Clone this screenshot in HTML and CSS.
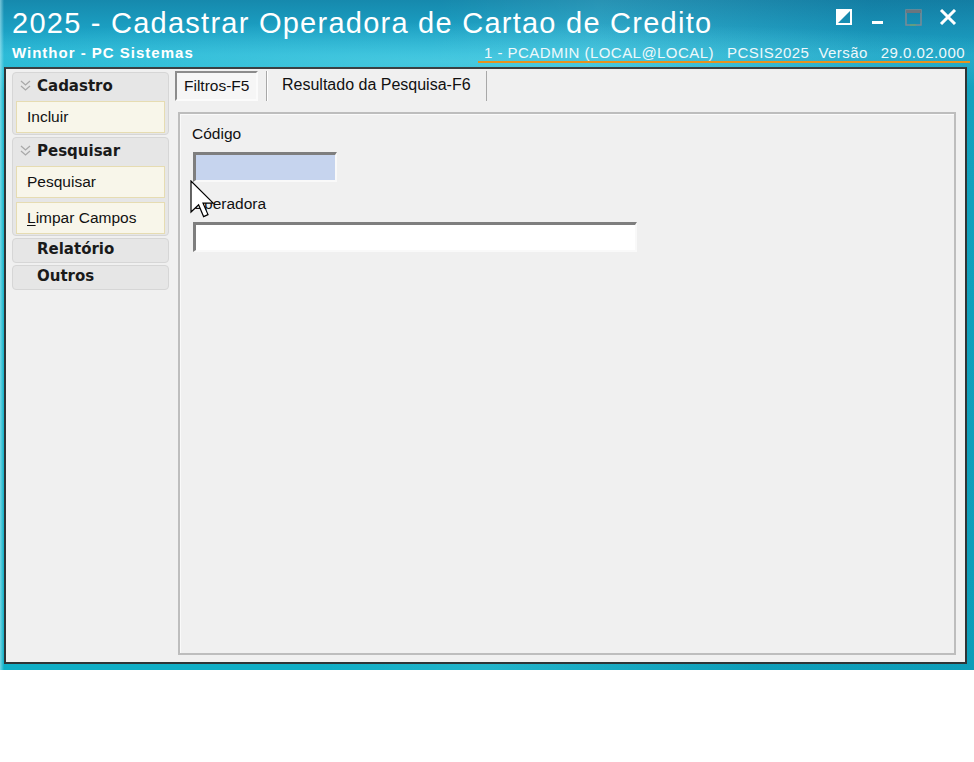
FILE: index.html
```html
<!DOCTYPE HTML>
<html>
	<head>
		<title>2025 - Cadastrar Operadora de Cartao de Credito</title>
		<meta charset="utf-8" />
		<link rel="stylesheet" href="styles.css">
	</head>
	<body>
		<div class="window">
			<div class="titlebar">
				<div class="title-row">
					<h1 class="title">2025 - Cadastrar Operadora de Cartao de Credito</h1>
					<div class="win-controls">
						<svg class="wc-restore" width="16" height="16" viewBox="0 0 16 16">
							<rect x="1" y="1" width="14" height="14" fill="none" stroke="#fff" stroke-width="2"/>
							<polygon points="1,1 15,1 1,15" fill="#fff"/>
						</svg>
						<svg class="wc-min" width="13" height="16" viewBox="0 0 13 16">
							<rect x="1" y="12" width="11" height="3" fill="#fff"/>
						</svg>
						<svg class="wc-max" width="17" height="17" viewBox="0 0 17 17">
							<rect x="1" y="1" width="15" height="15" fill="none" stroke="#7d8a94" stroke-width="1.5"/>
							<rect x="1" y="1" width="15" height="3" fill="#6a757e"/>
							<line x1="5" y1="16" x2="11" y2="16" stroke="#5fb06a" stroke-width="1"/>
						</svg>
						<svg class="wc-close" width="18" height="16" viewBox="0 0 18 16">
							<path d="M2 1 L16 15 M16 1 L2 15" stroke="#fff" stroke-width="3"/>
						</svg>
					</div>
				</div>
				<div class="sub-row">
					<span class="subtitle">Winthor - PC Sistemas</span>
					<div class="session">
						<span>1 - PCADMIN (LOCAL@LOCAL)</span>
						<span class="gap-l">PCSIS2025</span>
						<span class="gap-s">Versão</span>
						<span class="gap-l">29.0.02.000</span>
					</div>
				</div>
			</div>

			<div class="client">
				<div class="sidebar">
					<div class="group">
						<div class="group-head">
							<svg class="chev" width="11" height="12" viewBox="0 0 11 12">
								<path d="M1 1 L5.5 5 L10 1 M1 6 L5.5 10 L10 6" fill="none" stroke="#a9a9a9" stroke-width="1.3"/>
							</svg>
							Cadastro
						</div>
						<div class="item">Incluir</div>
					</div>
					<div class="group">
						<div class="group-head">
							<svg class="chev" width="11" height="12" viewBox="0 0 11 12">
								<path d="M1 1 L5.5 5 L10 1 M1 6 L5.5 10 L10 6" fill="none" stroke="#a9a9a9" stroke-width="1.3"/>
							</svg>
							Pesquisar
						</div>
						<div class="item">Pesquisar</div>
						<div class="item"><u>L</u>impar Campos</div>
					</div>
					<div class="group collapsed">
						<div class="group-head">Relatório</div>
					</div>
					<div class="group collapsed">
						<div class="group-head">Outros</div>
					</div>
				</div>

				<div class="main">
					<div class="tabs">
						<div class="tab active">Filtros-F5</div>
						<div class="tab">Resultado da Pesquisa-F6</div>
					</div>
					<div class="panel">
						<label class="field-label">Código</label>
						<div class="input input-code"></div>
						<label class="field-label">Operadora</label>
						<div class="input input-oper"></div>
					</div>
				</div>
			</div>
		</div>

		<svg class="cursor" width="26" height="40" viewBox="0 0 13 20">
			<path d="M0.5 0.5 L0.5 16 L4.3 12.4 L6.8 18.3 L9 17.3 L6.5 11.6 L11.6 11.6 Z" fill="#fff" stroke="#000" stroke-width="0.6" stroke-linejoin="miter"/>
		</svg>
	</body>
</html>
```

FILE: styles.css
```css
body {
	margin: 0;
	padding: 0;
	background: #fff;
	font-family: "Liberation Sans", Arial, sans-serif;
	width: 974px;
	height: 762px;
	overflow: hidden;
}

.window {
	width: 974px;
	height: 670px;
	box-sizing: border-box;
	padding: 0 7px 6px 4px;
	display: flex;
	flex-direction: column;
	background:
		linear-gradient(90deg, rgba(200, 245, 250, 0.55) 0px, rgba(200, 245, 250, 0) 4px),
		radial-gradient(ellipse 70% 40px at 45% 62px, rgba(120, 225, 240, 0.45), rgba(120, 225, 240, 0) 100%),
		linear-gradient(100deg, rgba(255, 255, 255, 0) 40%, rgba(255, 255, 255, 0.08) 55%, rgba(0, 40, 90, 0.12) 80%),
		linear-gradient(180deg, #1689ad 0px, #1b9fc2 28px, #1fb4d3 55px, #14b3cc 90px, #0faec6 100%);
}

/* title bar */

.titlebar {
	height: 67px;
	margin-left: -4px;
	margin-right: -7px;
	padding: 0 9px 0 12px;
	box-sizing: border-box;
	color: #fff;
}

.title-row {
	display: flex;
	justify-content: space-between;
	align-items: flex-start;
	height: 44px;
}

.title {
	margin: 9px 0 0 0;
	font-size: 29px;
	line-height: 29px;
	font-weight: normal;
	letter-spacing: 1.25px;
	white-space: nowrap;
}

.win-controls {
	display: flex;
	align-items: flex-start;
	margin-top: 9px;
	margin-right: 8px;
}

.wc-min { margin-left: 19px; }
.wc-max { margin-left: 21px; }
.wc-close { margin-left: 17px; }

.sub-row {
	display: flex;
	justify-content: space-between;
	align-items: flex-start;
}

.subtitle {
	font-weight: bold;
	font-size: 15px;
	line-height: 17px;
	letter-spacing: 1px;
	white-space: nowrap;
}

.session {
	display: flex;
	font-size: 15px;
	line-height: 17px;
	letter-spacing: 0.45px;
	color: #eef8fb;
	white-space: nowrap;
	padding: 0 5px 0 6px;
	margin-right: -5px;
	border-bottom: 2px solid #e8921c;
}

.gap-l { margin-left: 13px; }
.gap-s { margin-left: 9px; }

/* client area */

.client {
	flex: 1;
	display: flex;
	background: #f0f0f0;
	border: 2px solid #2e3436;
	border-top-color: #3a3f42;
	min-height: 0;
}

.sidebar {
	width: 157px;
	padding: 3px 3px 0 6px;
	display: flex;
	flex-direction: column;
	gap: 2px;
}

.group {
	background: #e6e6e6;
	border: 1px solid #d6d6d6;
	border-radius: 4px;
	padding-bottom: 1px;
}

.group-head {
	position: relative;
	height: 28px;
	line-height: 26px;
	padding-left: 24px;
	font-family: "DejaVu Sans", sans-serif;
	font-weight: bold;
	font-size: 15px;
	color: #1a1a1a;
}

.group.collapsed {
	padding-bottom: 0;
}

.group.collapsed .group-head {
	height: 23px;
	line-height: 21px;
}

.chev {
	position: absolute;
	left: 7px;
	top: 7px;
}

.item {
	height: 30px;
	margin: 0 3px 4px 3px;
	padding-left: 10px;
	background: #f8f6ea;
	border: 1px solid #e6dcb2;
	font-size: 15.5px;
	line-height: 30px;
	color: #111;
}

.item:last-child {
	margin-bottom: 0;
}

.item u {
	text-decoration-thickness: 1px;
	text-underline-offset: 2px;
}

/* tabs and panel */

.main {
	flex: 1;
	display: flex;
	flex-direction: column;
	padding: 2px 9px 7px 3px;
	min-width: 0;
}

.tabs {
	display: flex;
	height: 30px;
	align-items: stretch;
}

.tab {
	font-size: 16px;
	line-height: 28px;
	color: #111;
	white-space: nowrap;
}

.tab.active {
	width: 72px;
	padding-left: 7px;
	border: 2px solid;
	border-color: #8c8c8c #fbfbfb #fbfbfb #8c8c8c;
	background: #f6f6f6;
	font-size: 15.5px;
	line-height: 26px;
}

.tab + .tab {
	margin-left: 8px;
	padding: 0 15px;
	border-left: 1px solid #a8a8a8;
	border-right: 1px solid #a8a8a8;
	box-shadow: inset 1px 0 0 #fff;
}

.panel {
	flex: 1;
	margin: 11px 0 0 3px;
	border: 2px solid #bdbdbd;
	box-shadow: inset 1px 1px 0 #fafafa;
	background: #f0f0f0;
	padding: 10px 0 0 12px;
	display: flex;
	flex-direction: column;
	align-items: flex-start;
}

.field-label {
	font-size: 15.5px;
	line-height: 20px;
	color: #111;
}

.input {
	box-sizing: border-box;
	height: 30px;
	margin: 8px 0 12px 1px;
	border: 3px solid;
	border-width: 3px 2px 2px 3px;
	border-color: #7e7e7e #f9f9f9 #f9f9f9 #7e7e7e;
}

.input-code {
	width: 144px;
	background: #c6d4ee;
}

.input-oper {
	width: 444px;
	background: #fff;
}

.cursor {
	position: absolute;
	left: 190px;
	top: 180px;
}
```
